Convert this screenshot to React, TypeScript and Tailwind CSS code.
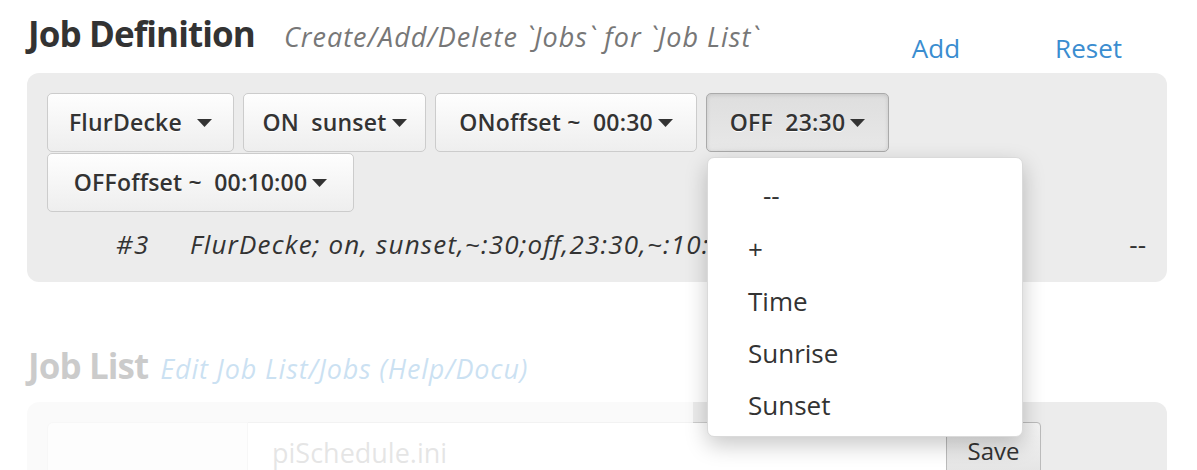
import React from "react";

const font = "font-['Open_Sans','Liberation_Sans',sans-serif]";

function Caret() {
  return (
    <svg width="15" height="8" viewBox="0 0 15 8" className="ml-[5px] inline-block">
      <path d="M0 0 L15 0 L7.5 8 Z" fill="#333" />
    </svg>
  );
}

function Select({
  label,
  pressed = false,
  className = "",
  children,
}: {
  label: React.ReactNode;
  pressed?: boolean;
  className?: string;
  children?: React.ReactNode;
}) {
  return (
    <div className="relative">
      <div
        className={`flex h-[59px] items-center justify-center rounded-[5px] border text-[23px] font-semibold tracking-[0.2px] text-[#333] [text-shadow:0_1px_0_#fff] ${
          pressed
            ? "border-[#aaa] bg-gradient-to-b from-[#dedede] to-[#e8e8e8] shadow-[inset_0_1px_4px_rgba(0,0,0,0.12)]"
            : "border-[#ccc] bg-gradient-to-b from-[#fefefe] to-[#eeeeee]"
        } ${className}`}
      >
        {label}
        <Caret />
      </div>
      {children}
    </div>
  );
}

function Dropdown() {
  const items = ["+", "Time", "Sunrise", "Sunset"];
  return (
    <div className="absolute left-[1px] top-[64px] z-20 h-[280px] w-[316px] rounded-[7px] border border-[#dadada] bg-white pt-[17px] shadow-[0_8px_22px_rgba(0,0,0,0.22)]">
      <div className="h-[52px] pl-[55px] text-[26px] leading-[40px] text-[#333]">--</div>
      {items.map((it) => (
        <div key={it} className="h-[52px] pl-[40px] text-[26px] leading-[44px] text-[#333]">
          {it}
        </div>
      ))}
    </div>
  );
}

export default function App() {
  return (
    <div className={`relative h-[470px] w-[1197px] overflow-hidden bg-white ${font}`}>
      {/* Job Definition header */}
      <div className="flex h-[73px] items-start pl-[28px] pr-[75px] pt-[14px]">
        <div className="flex items-baseline">
          <h1 className="text-[35px] font-bold leading-[40px] tracking-[-0.9px] text-[#333]">Job Definition</h1>
          <span className="ml-[29px] text-[27px] italic leading-[30px] tracking-[1px] text-[#777]">
            Create/Add/Delete `Jobs` for `Job List`
          </span>
        </div>
        <div className="ml-auto mt-[19px] flex gap-[95px] text-[26px] leading-[30px] text-[#3a8dd0]">
          <span>Add</span>
          <span>Reset</span>
        </div>
      </div>

      {/* definition panel */}
      <div className="ml-[27px] mr-[30px] h-[209px] rounded-[12px] bg-[#ececec] px-[20px] pt-[20px]">
        <div className="flex w-[860px] flex-wrap gap-x-[9px] gap-y-[1px]">
          <Select className="w-[187px]" label={<span className="mr-[4px]">FlurDecke&nbsp;</span>} />
          <Select className="w-[183px]" label={<span>ON&nbsp; sunset</span>} />
          <Select className="w-[262px]" label={<span>ONoffset ~&nbsp; 00:30</span>} />
          <Select pressed className="w-[183px]" label={<span>OFF&nbsp; 23:30</span>}>
            <Dropdown />
          </Select>
          <Select className="w-[307px]" label={<span>OFFoffset ~&nbsp; 00:10:00</span>} />
        </div>
        <div className="mt-[17px] flex items-center text-[26px] italic leading-[30px] tracking-[1.2px] text-[#333]">
          <span className="ml-[69px] w-[74px]">#3</span>
          <span>FlurDecke; on, sunset,~:30;off,23:30,~:10:00</span>
          <span className="ml-auto mr-[1px] not-italic tracking-normal">--</span>
        </div>
      </div>

      {/* Job List */}
      <div className="mt-[64px] flex items-baseline px-[28px]">
        <h2 className="text-[35px] font-bold leading-[40px] tracking-[-0.9px] text-[#333]">Job List</h2>
        <span className="ml-[12px] text-[27px] italic tracking-[0.8px] text-[#3388cc]">Edit Job List/Jobs (Help/Docu)</span>
      </div>
      <div className="ml-[27px] mr-[30px] mt-[12px] h-[120px] rounded-[12px] bg-[#ececec] px-[20px] pt-[20px]">
        <div className="flex h-[100px]">
          <div className="w-[201px] rounded-tl-[6px] border-l border-r border-t border-[#ddd] bg-[#f6f6f6]" />
          <div className="w-[698px] border-t border-[#ccc] bg-white pl-[24px] pt-[12px] text-[27px] leading-[36px] text-[#999]">
            piSchedule.ini
          </div>
          <div className="h-[60px] w-[95px] rounded-tr-[4px] border border-[#bbb] bg-gradient-to-b from-[#f4f4f4] to-[#e2e2e2] pt-[13px] text-center text-[24px] leading-[30px] text-[#333]">
            Save
          </div>
        </div>
      </div>

      {/* screen fade over lower left */}
      <div className="absolute bottom-0 left-0 top-[323px] z-10 w-[693px] bg-white/75" />
    </div>
  );
}
